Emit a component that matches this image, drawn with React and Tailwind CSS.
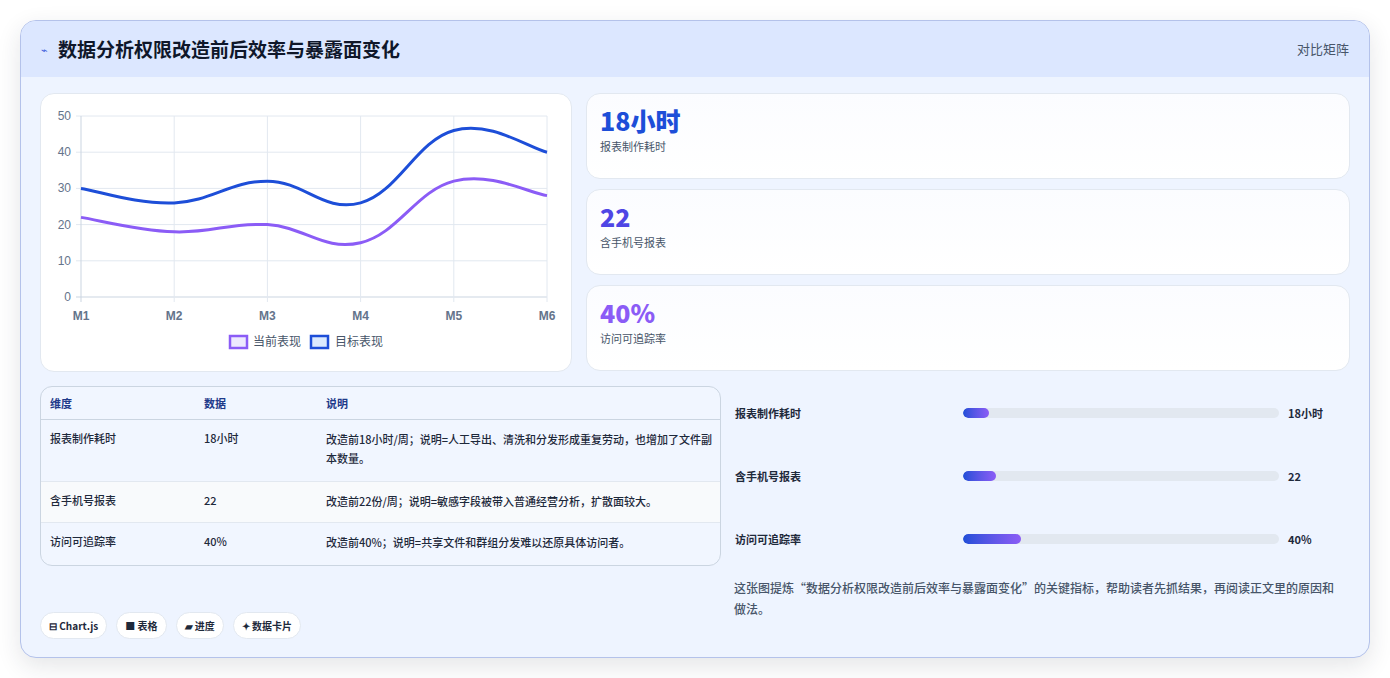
import React from "react";

const F = { fontFamily: '"Noto Sans CJK SC", "Noto Sans", sans-serif' };

function pathFor(data, xs, y) {
  const pts = data.map((v, i) => [xs[i], y(v)]);
  let d = `M${pts[0][0]},${pts[0][1]}`;
  const t = 0.4;
  for (let i = 0; i < pts.length - 1; i++) {
    const p0 = pts[i - 1] || pts[i];
    const p1 = pts[i];
    const p2 = pts[i + 1];
    const p3 = pts[i + 2] || p2;
    const c1x = p1[0] + ((p2[0] - p0[0]) * t) / 2;
    const c1y = p1[1] + ((p2[1] - p0[1]) * t) / 2;
    const c2x = p2[0] - ((p3[0] - p1[0]) * t) / 2;
    const c2y = p2[1] - ((p3[1] - p1[1]) * t) / 2;
    d += ` C${c1x},${c1y} ${c2x},${c2y} ${p2[0]},${p2[1]}`;
  }
  return d;
}

function Chart() {
  const x0 = 40, x1 = 506, yTop = 22, yBot = 203;
  const xs = [0, 1, 2, 3, 4, 5].map((i) => x0 + ((x1 - x0) / 5) * i);
  const y = (v) => yBot - ((yBot - yTop) * v) / 50;
  const cur = [22, 18, 20, 15, 32, 28];
  const tgt = [30, 26, 32, 26, 46, 40];
  return (
    <svg width="530" height="277" className="block" style={{ fontFamily: '"Liberation Sans", "Noto Sans CJK SC", sans-serif' }}>
      {[0, 10, 20, 30, 40, 50].map((v) => (
        <g key={v}>
          <line x1={x0 - 5} x2={x1} y1={y(v)} y2={y(v)} stroke={v === 0 ? "#cbd5e1" : "#e2e8f0"} />
          <text x={x0 - 10} y={y(v) + 4} textAnchor="end" fontSize="12" fill="#64748b">{v}</text>
        </g>
      ))}
      {xs.map((x, i) => (
        <g key={i}>
          <line x1={x} x2={x} y1={yTop} y2={yBot + 5} stroke={i === 0 ? "#cbd5e1" : "#e2e8f0"} />
          <text x={x} y={yBot + 23} textAnchor="middle" fontSize="12" fontWeight="bold" fill="#64748b">M{i + 1}</text>
        </g>
      ))}
      <path d={pathFor(tgt, xs, y)} fill="none" stroke="#1d4ed8" strokeWidth="3" />
      <path d={pathFor(cur, xs, y)} fill="none" stroke="#8b5cf6" strokeWidth="3" />
      <rect x="189" y="242" width="17" height="12" fill="#ede9fe" stroke="#8b5cf6" strokeWidth="2.5" />
      <text x="212" y="252" fontSize="12" fill="#475569" style={F}>当前表现</text>
      <rect x="270" y="242" width="17" height="12" fill="#dbeafe" stroke="#1d4ed8" strokeWidth="2.5" />
      <text x="294" y="252" fontSize="12" fill="#475569" style={F}>目标表现</text>
    </svg>
  );
}

const stats = [
  { v: "18小时", l: "报表制作耗时", c: "text-[#1d4ed8]" },
  { v: "22", l: "含手机号报表", c: "text-[#4f46e5]" },
  { v: "40%", l: "访问可追踪率", c: "text-[#8b5cf6]" },
];

const rows = [
  ["报表制作耗时", "18小时", "改造前18小时/周；说明=人工导出、清洗和分发形成重复劳动，也增加了文件副本数量。", "h-[62px]"],
  ["含手机号报表", "22", "改造前22份/周；说明=敏感字段被带入普通经营分析，扩散面较大。", "h-[41px] bg-[#f8fafc]"],
  ["访问可追踪率", "40%", "改造前40%；说明=共享文件和群组分发难以还原具体访问者。", "h-[42px]"],
];

const bars = [
  ["报表制作耗时", "18小时", 8.3],
  ["含手机号报表", "22", 10.5],
  ["访问可追踪率", "40%", 18.5],
];

export default function App() {
  return (
    <div className="w-[1390px] h-[678px] bg-white pt-[20px] pl-[20px]" style={F}>
      <div className="w-[1350px] h-[638px] rounded-[16px] border border-[#b4c2ea] bg-[#eef4ff] overflow-hidden shadow-[0_8px_24px_rgba(30,41,59,0.12)]">
        <div className="h-[56px] bg-[#dce7ff] flex items-center justify-between px-[20px]">
          <div className="flex items-center gap-[10px]">
            <span className="text-[#3b5bdb] text-[11px]">⌁</span>
            <span className="text-[19px] font-bold text-[#0f172a]">数据分析权限改造前后效率与暴露面变化</span>
          </div>
          <span className="text-[13px] text-[#475569]">对比矩阵</span>
        </div>
        <div className="px-[19px] pt-[16px]">
          <div className="flex gap-[14px]">
            <div className="w-[532px] h-[279px] bg-white rounded-[14px] border border-[#e2e8f0] overflow-hidden">
              <Chart />
            </div>
            <div className="flex-1 flex flex-col gap-[10px]">
              {stats.map((s) => (
                <div key={s.l} className="h-[86px] rounded-[14px] border border-[#e2e8f0] bg-gradient-to-b from-[#fbfcff] to-white px-[13px] pt-[9px]">
                  <div className={`text-[25px] font-extrabold leading-[34px] ${s.c}`}>{s.v}</div>
                  <div className="text-[11px] text-[#475569] mt-[1px]">{s.l}</div>
                </div>
              ))}
            </div>
          </div>
          <div className="flex gap-[13px] mt-[14px]">
            <div className="w-[681px]">
              <div className="rounded-[12px] border border-[#cbd5e1] bg-[#f1f6ff] overflow-hidden text-[11px]">
                <div className="flex h-[33px] items-center border-b border-[#cbd5e1] text-[#1e3a8a] font-bold">
                  <div className="w-[163px] pl-[9px]">维度</div>
                  <div className="w-[122px]">数据</div>
                  <div className="flex-1">说明</div>
                </div>
                {rows.map((r, i) => (
                  <div key={i} className={`flex pt-[10px] text-[#1e293b] font-medium ${r[3]} ${i < 2 ? "border-b border-[#e2e8f0]" : ""}`}>
                    <div className="w-[163px] pl-[9px]">{r[0]}</div>
                    <div className="w-[122px]">{r[1]}</div>
                    <div className="flex-1 pr-[6px] leading-[19px]">{r[2]}</div>
                  </div>
                ))}
              </div>
              <div className="flex gap-[9px] mt-[46px] text-[10px] font-bold text-[#1e293b]">
                {["⊟ Chart.js", "■ 表格", "▰ 进度", "✦ 数据卡片"].map((c) => (
                  <span key={c} className="h-[27px] px-[8px] flex items-center rounded-full bg-white border border-[#e2e8f0]">{c}</span>
                ))}
              </div>
            </div>
            <div className="flex-1 pt-[16px]">
              {bars.map((b) => (
                <div key={b[0]} className="flex items-center h-[22px] mb-[41px] text-[11px] font-bold text-[#1e293b]">
                  <div className="w-[229px] pl-[1px]">{b[0]}</div>
                  <div className="w-[316px] h-[10px] rounded-full bg-[#e2e8f0] overflow-hidden">
                    <div className="h-full rounded-full bg-gradient-to-r from-[#1d4ed8] to-[#8b5cf6]" style={{ width: `${b[2]}%` }} />
                  </div>
                  <div className="pl-[9px]">{b[1]}</div>
                </div>
              ))}
              <p className="-mt-[14px] text-[12px] leading-[21px] text-[#475569] font-medium pr-[10px]">
                这张图提炼“数据分析权限改造前后效率与暴露面变化”的关键指标，帮助读者先抓结果，再阅读正文里的原因和做法。
              </p>
            </div>
          </div>
        </div>
      </div>
    </div>
  );
}
